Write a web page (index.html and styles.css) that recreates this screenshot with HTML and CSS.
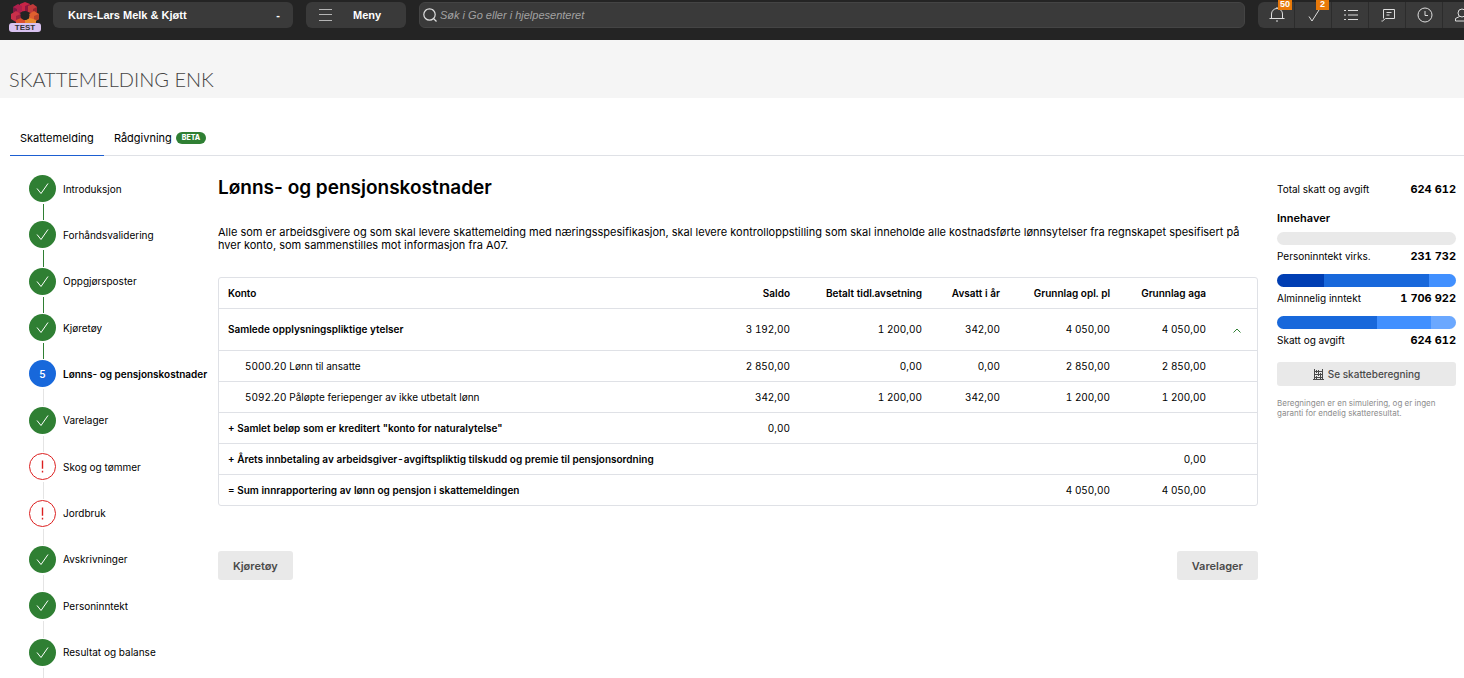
FILE: index.html
```html
<!DOCTYPE html>
<html lang="no">
<head>
<meta charset="utf-8">
<meta name="viewport" content="width=device-width, initial-scale=1">
<title>Skattemelding ENK</title>
<link rel="stylesheet" href="styles.css">
</head>
<body>
<header class="topbar">
  <a class="logo" href="#" aria-label="Hjem">
    <svg class="logo-mark" viewBox="0 0 30 24" aria-hidden="true">
      <path fill="#c92546" d="M10 3l5-2 5 2v6l-5 3-5-3z"/><path fill="#8e1740" d="M15 5l5-2v6l-5 3z"/>
      <path fill="#b01f4c" d="M3 6l5-3 4 2v6l-5 2-4-2z"/><path fill="#7b1a42" d="M3 6l4 2v5l-4-2z"/>
      <path fill="#c23a3a" d="M18 5l5-2 4 3v5l-4 2-5-2z"/><path fill="#97262f" d="M23 8l4-2v5l-4 2z"/>
      <path fill="#c8304a" d="M1 13l5-3 5 3v5l-5 3-5-3z"/><path fill="#9c2440" d="M6 15l5-2v5l-5 3z"/>
      <path fill="#e0602f" d="M19 13l5-3 5 3v5l-5 3-5-3z"/><path fill="#b8432a" d="M24 15l5-2v5l-5 3z"/>
      <path fill="#d94f2e" d="M6 19l5-2 4 2v5H6z"/><path fill="#e88a2e" d="M15 19l5-2 6 2v5H15z"/>
      <circle cx="15" cy="14.500" r="4.500" fill="#242424"/>
    </svg>
    <span class="logo-tag">TEST</span>
  </a>
  <button class="control company" type="button"><span>Kurs-Lars Melk &amp; Kjøtt</span><span>-</span></button>
  <button class="control menu" type="button">
    <svg width="14" height="12" viewBox="0 0 14 12" aria-hidden="true"><path d="M0 .5h13M0 5.500h13M0 11.500h13" stroke="#b5b5b5"/></svg>
    <span>Meny</span>
  </button>
  <label class="control search">
    <svg width="14" height="14" viewBox="0 0 14 14" fill="none" stroke="#ddd" stroke-width="1.200" aria-hidden="true"><circle cx="6.500" cy="6.500" r="5.700"/><path d="M10.500 10.500l3 3"/></svg>
    <input type="search" placeholder="Søk i Go eller i hjelpesenteret" aria-label="Søk">
  </label>
  <nav class="tools" aria-label="Verktøy">
    <button type="button" aria-label="Varsler">
      <svg viewBox="0 0 16 16"><path d="M.5 11.500h15M2.500 11.500V7a5.500 5.500 0 0 1 11 0v4.500M8 1.500V0M7 14h2"/></svg><span class="badge">50</span>
    </button>
    <button type="button" aria-label="Oppgaver">
      <svg viewBox="0 0 16 16"><path d="M3 9.500l3 4.500L13 3"/></svg><span class="badge">2</span>
    </button>
    <button type="button" aria-label="Liste">
      <svg viewBox="0 0 16 16"><path d="M1 3.500h2M1 8h2M1 12.500h2M5 3.500h10M5 8h10M5 12.500h10"/></svg>
    </button>
    <button type="button" aria-label="Meldinger">
      <svg viewBox="0 0 16 16"><path d="M3.500 2.500h11v9h-9l-3 2.500h-1M3.500 2.500v9M6.500 5.500h5M6.500 8h3"/></svg>
    </button>
    <button type="button" aria-label="Historikk">
      <svg viewBox="0 0 16 16"><circle cx="8" cy="8" r="7"/><path d="M8 4v4.500h3"/></svg>
    </button>
    <button type="button" aria-label="Profil">
      <svg viewBox="0 0 16 16"><circle cx="8" cy="6" r="4"/><path d="M5.500 9.500L1.500 11.500V14h13v-2.500l-4-2"/></svg>
    </button>
  </nav>
</header>

<div class="page-title"><h1>SKATTEMELDING ENK</h1></div>

<nav class="tabs">
  <a class="tab active" href="#">Skattemelding</a>
  <a class="tab" href="#">Rådgivning <span class="beta">BETA</span></a>
</nav>

<div class="layout">
  <ol class="steps">
    <li class="step done"><a href="#"><span class="dot"><svg viewBox="0 0 27 27"><path d="M8 13.500l4 5 7-10"/></svg></span>Introduksjon</a></li>
    <li class="step done"><a href="#"><span class="dot"><svg viewBox="0 0 27 27"><path d="M8 13.500l4 5 7-10"/></svg></span>Forhåndsvalidering</a></li>
    <li class="step done"><a href="#"><span class="dot"><svg viewBox="0 0 27 27"><path d="M8 13.500l4 5 7-10"/></svg></span>Oppgjørsposter</a></li>
    <li class="step done"><a href="#"><span class="dot"><svg viewBox="0 0 27 27"><path d="M8 13.500l4 5 7-10"/></svg></span>Kjøretøy</a></li>
    <li class="step current"><a href="#" aria-current="step"><span class="dot">5</span>Lønns- og pensjonskostnader</a></li>
    <li class="step"><a href="#"><span class="dot"><svg viewBox="0 0 27 27"><path d="M8 13.500l4 5 7-10"/></svg></span>Varelager</a></li>
    <li class="step warn"><a href="#"><span class="dot"><svg viewBox="0 0 27 27"><path d="M13.500 7v9M13.500 18v2"/></svg></span>Skog og tømmer</a></li>
    <li class="step warn"><a href="#"><span class="dot"><svg viewBox="0 0 27 27"><path d="M13.500 7v9M13.500 18v2"/></svg></span>Jordbruk</a></li>
    <li class="step"><a href="#"><span class="dot"><svg viewBox="0 0 27 27"><path d="M8 13.500l4 5 7-10"/></svg></span>Avskrivninger</a></li>
    <li class="step"><a href="#"><span class="dot"><svg viewBox="0 0 27 27"><path d="M8 13.500l4 5 7-10"/></svg></span>Personinntekt</a></li>
    <li class="step"><a href="#"><span class="dot"><svg viewBox="0 0 27 27"><path d="M8 13.500l4 5 7-10"/></svg></span>Resultat og balanse</a></li>
  </ol>

  <main class="content">
    <h2>Lønns- og pensjonskostnader</h2>
    <p class="intro">Alle som er arbeidsgivere og som skal levere skattemelding med næringsspesifikasjon, skal levere kontrolloppstilling som skal inneholde alle kostnadsførte lønnsytelser fra regnskapet spesifisert på hver konto, som sammenstilles mot informasjon fra A07.</p>
    <div class="table-box">
      <table>
        <colgroup><col><col class="c-saldo"><col class="c-betalt"><col class="c-avsatt"><col class="c-opl"><col class="c-aga"><col class="c-toggle"></colgroup>
        <thead>
          <tr><th>Konto</th><th>Saldo</th><th>Betalt tidl.avsetning</th><th>Avsatt i år</th><th>Grunnlag opl. pl</th><th>Grunnlag aga</th><td></td></tr>
        </thead>
        <tbody>
          <tr class="group"><th>Samlede opplysningspliktige ytelser</th><td>3 192,00</td><td>1 200,00</td><td>342,00</td><td>4 050,00</td><td>4 050,00</td><td><button class="toggle" type="button" aria-label="Skjul detaljer"><svg width="8" height="5" viewBox="0 0 8 5"><path d="M.5 4.500L4 1l3.500 3.500" fill="none" stroke="#2f7f33"/></svg></button></td></tr>
          <tr class="detail"><td>5000.20 Lønn til ansatte</td><td>2 850,00</td><td>0,00</td><td>0,00</td><td>2 850,00</td><td>2 850,00</td><td></td></tr>
          <tr class="detail"><td>5092.20 Påløpte feriepenger av ikke utbetalt lønn</td><td>342,00</td><td>1 200,00</td><td>342,00</td><td>1 200,00</td><td>1 200,00</td><td></td></tr>
          <tr><th>+ Samlet beløp som er kreditert "konto for naturalytelse"</th><td>0,00</td><td></td><td></td><td></td><td></td><td></td></tr>
          <tr><th>+ Årets innbetaling av arbeidsgiver-avgiftspliktig tilskudd og premie til pensjonsordning</th><td></td><td></td><td></td><td></td><td>0,00</td><td></td></tr>
          <tr><th>= Sum innrapportering av lønn og pensjon i skattemeldingen</th><td></td><td></td><td></td><td>4 050,00</td><td>4 050,00</td><td></td></tr>
        </tbody>
      </table>
    </div>
    <div class="actions"><button class="btn" type="button">Kjøretøy</button><button class="btn" type="button">Varelager</button></div>
  </main>

  <aside class="summary">
    <div class="line total"><span>Total skatt og avgift</span><strong>624 612</strong></div>
    <h3>Innehaver</h3>
    <div class="bar"></div>
    <div class="line"><span>Personinntekt virks.</span><strong>231 732</strong></div>
    <div class="bar"><i class="navy" style="width:26.500%"></i><i class="blue" style="width:58.500%"></i><i class="sky" style="width:15%"></i></div>
    <div class="line"><span>Alminnelig inntekt</span><strong>1 706 922</strong></div>
    <div class="bar"><i class="blue" style="width:56%"></i><i class="sky" style="width:30%"></i><i class="pale" style="width:14%"></i></div>
    <div class="line"><span>Skatt og avgift</span><strong>624 612</strong></div>
    <button class="calc" type="button">
      <svg width="11" height="11" viewBox="0 0 11 11" aria-hidden="true" stroke="#4a4a4a" fill="none"><path d="M1.500 0v11M9.500 0v11M0 10.500h11M1 2.500h9M1 5.500h9M1 8.500h9"/><path d="M3.500 1v3M5.500 1v3M5.500 4v3M7.500 4v3M3.500 7v3M7.500 7v3"/></svg>
      Se skatteberegning
    </button>
    <p class="note">Beregningen er en simulering, og er ingen garanti for endelig skatteresultat.</p>
  </aside>
</div>
</body>
</html>
```

FILE: styles.css
```css
* { box-sizing: border-box; }
body { margin: 0; background: #fff; color: #000; font: 10px/14px Inter, "Liberation Sans", sans-serif; overflow-x: hidden; }
a { color: inherit; text-decoration: none; }
button { border: 0; font: inherit; color: inherit; cursor: pointer; }
h1, h2, h3, p, ol { margin: 0; padding: 0; }

.topbar { display: flex; align-items: flex-start; height: 40px; padding: 2px 0 0 9px; background: #242424; color: #fff; font: 11px/26px "Liberation Sans", Arial, sans-serif; overflow: hidden; }
.logo { position: relative; flex: none; width: 32px; height: 32px; margin-right: 12px; }
.logo-mark { display: block; width: 30px; height: 24px; margin: -1px auto 0; }
.logo-tag { position: absolute; left: 0; right: 0; bottom: 2px; height: 9px; border-radius: 3px; background: #d9c2f0; color: #333; font-size: 8px; line-height: 9px; font-weight: 700; text-align: center; }
.control { display: flex; align-items: center; flex: none; height: 26px; border-radius: 6px; background: #3a3a3a; color: #fff; font-weight: 700; }
.company { justify-content: space-between; width: 240px; margin-right: 13px; padding: 0 13px 0 15px; }
.menu { gap: 20px; width: 100px; margin-right: 13px; padding: 0 13px; }
.search { flex: 1; gap: 3px; min-width: 0; margin-right: 13px; padding: 0 3px; border: 1px solid #444; }
.search input { flex: 1; min-width: 0; padding: 0; border: 0; outline: 0; background: none; color: #fff; font: italic 11px/24px "Liberation Sans", Arial, sans-serif; }
.search input::placeholder { color: #a2a2a2; opacity: 1; }
.tools { display: flex; flex: none; width: 206px; }
.tools button { position: relative; display: grid; flex: none; place-items: center; width: 37px; height: 26px; padding: 0 0 0 2px; border-right: 1px solid #2c2c2c; background: #3a3a3a; }
.tools button:first-child { border-radius: 6px 0 0 6px; }
.tools svg { width: 16px; height: 16px; fill: none; stroke: #ddd; }
.badge { position: absolute; top: -2px; right: 2px; min-width: 13px; height: 10px; padding: 0 2px; background: #e87909; color: #fff; font: 700 9px/8px "Liberation Sans", Arial, sans-serif; text-align: center; }

.page-title { padding: 32px 9px 12px; background: #f5f5f5; }
h1 { color: #444; font: 300 20px/14px Lato, sans-serif; }
.tabs { display: flex; margin: 23px 0 0 10px; border-bottom: 1px solid #dfe1e6; font-size: 11px; line-height: 14px; }
.tab { display: flex; align-items: center; gap: 4px; margin-bottom: -1px; padding: 10px; border-bottom: 1px solid transparent; }
.active { border-bottom-color: #1d5fd1; }
.beta { padding: 0 6px; border-radius: 6px; background: #2f7f33; color: #fff; font-size: 7px; line-height: 12px; font-weight: 800; }

.layout { display: grid; grid-template-columns: 189px minmax(0, 1fr) 179px; padding: 19px 8px 0 29px; }
.steps { display: grid; grid-auto-rows: 1fr; min-height: 510px; list-style: none; }
.step { position: relative; white-space: nowrap; }
.step a { display: flex; align-items: center; gap: 7px; }
.step::after { content: ""; position: absolute; left: 14px; top: 29px; bottom: 1px; width: 1px; background: #e4e4e4; }
.done::after { background: #2f7f33; }
.dot { display: grid; flex: none; place-items: center; width: 27px; height: 27px; border-radius: 50%; background: #2f7f33; color: #fff; }
.dot svg { width: 27px; height: 27px; fill: none; stroke: #fff; }
.current { font-weight: 600; }
.current .dot { background: #1868db; }
.warn .dot { border: 1px solid #dc1f1f; background: #fff; }
.warn .dot svg { width: 25px; height: 25px; stroke: #dc1f1f; stroke-width: 1.5; }

h2 { padding-top: 2px; font-size: 19px; line-height: 22px; font-weight: 600; }
.intro { margin-top: 27px; font-size: 11px; line-height: 13px; }
.table-box { margin-top: 25px; border: 1px solid #dfe1e6; border-radius: 3px; }
table { width: 100%; border-collapse: collapse; table-layout: fixed; font-variant-numeric: tabular-nums; }
th, td { height: 31px; padding: 0 10px; text-align: right; line-height: 14px; font-weight: 400; white-space: nowrap; }
th { font-weight: 600; }
thead > tr > * { height: 30px; }
tr > :first-child { padding-left: 9px; text-align: left; }
tbody tr { border-top: 1px solid #dfe1e6; }
.group > * { height: 42px; }
.detail > :first-child { padding-left: 26px; }
.c-saldo { width: 96px; }
.c-betalt { width: 132px; }
.c-avsatt { width: 78px; }
.c-opl { width: 110px; }
.c-aga { width: 96px; }
.c-toggle { width: 41px; }
td:last-child { text-align: center; }
.toggle { padding: 4px; background: none; line-height: 5px; }
.actions { display: flex; justify-content: space-between; margin-top: 45px; }
.btn { height: 29px; padding: 0 15px; border-radius: 3px; background: #e9e9e9; color: #4a4a4a; font-size: 11px; font-weight: 600; }
.content { padding-right: 19px; }

.summary { padding-top: 7px; }
.line { display: flex; align-items: center; justify-content: space-between; margin-bottom: 7px; line-height: 22px; }
.line strong { font-size: 11px; font-weight: 700; font-variant-numeric: tabular-nums; }
.total { margin-bottom: 0; line-height: 14px; }
h3 { margin: 15px 0 7px; font-size: 11px; line-height: 14px; font-weight: 600; }
.bar { display: flex; height: 13px; border-radius: 7px; background: #e9e9e9; overflow: hidden; }
.navy { background: #003eb3; }
.blue { background: #1868db; }
.sky { background: #4190ff; }
.pale { background: #6ba8ff; }
.calc { display: flex; align-items: center; justify-content: center; gap: 4px; width: 100%; height: 24px; margin-top: 11px; padding: 0; border-radius: 3px; background: #e9e9e9; color: #4a4a4a; font-weight: 500; }
.note { margin-top: 12px; color: #8c8c8c; font-size: 8px; line-height: 10px; }
```
